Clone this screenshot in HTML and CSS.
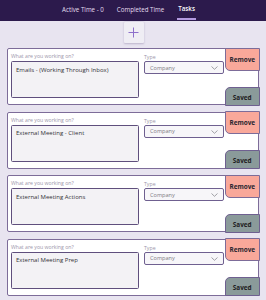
FILE: index.html
```html
<!DOCTYPE html>
<html>
<head>
<meta charset="utf-8">
<link rel="stylesheet" href="styles.css">
</head>
<body>
<header class="topbar">
  <nav class="tabs">
    <span class="tab">Active Time - 0</span>
    <span class="tab">Completed Time</span>
    <span class="tab active">Tasks</span>
  </nav>
</header>
<div class="addrow">
  <button class="addbtn" aria-label="Add">
    <svg width="11" height="11" viewBox="0 0 11 11"><path d="M5.5 0.5V10.5M0.5 5.5H10.5" stroke="#8d6fcb" stroke-width="1" fill="none"/></svg>
  </button>
</div>
<main class="list">
  <section class="card">
    <div class="work">
      <div class="lbl">What are you working on?</div>
      <div class="ta">Emails - (Working Through Inbox)</div>
    </div>
    <div class="type">
      <div class="lbl">Type</div>
      <div class="sel"><span>Company</span><svg class="chev" width="7" height="4" viewBox="0 0 7 4"><path d="M0.5 0.5L3.5 3.3L6.5 0.5" stroke="#8a8a90" stroke-width="0.8" fill="none"/></svg></div>
    </div>
    <div class="acts">
      <div class="remove">Remove</div>
      <div class="saved">Saved</div>
    </div>
  </section>
  <section class="card">
    <div class="work">
      <div class="lbl">What are you working on?</div>
      <div class="ta">External Meeting - Client</div>
    </div>
    <div class="type">
      <div class="lbl">Type</div>
      <div class="sel"><span>Company</span><svg class="chev" width="7" height="4" viewBox="0 0 7 4"><path d="M0.5 0.5L3.5 3.3L6.5 0.5" stroke="#8a8a90" stroke-width="0.8" fill="none"/></svg></div>
    </div>
    <div class="acts">
      <div class="remove">Remove</div>
      <div class="saved">Saved</div>
    </div>
  </section>
  <section class="card">
    <div class="work">
      <div class="lbl">What are you working on?</div>
      <div class="ta">External Meeting Actions</div>
    </div>
    <div class="type">
      <div class="lbl">Type</div>
      <div class="sel"><span>Company</span><svg class="chev" width="7" height="4" viewBox="0 0 7 4"><path d="M0.5 0.5L3.5 3.3L6.5 0.5" stroke="#8a8a90" stroke-width="0.8" fill="none"/></svg></div>
    </div>
    <div class="acts">
      <div class="remove">Remove</div>
      <div class="saved">Saved</div>
    </div>
  </section>
  <section class="card">
    <div class="work">
      <div class="lbl">What are you working on?</div>
      <div class="ta">External Meeting Prep</div>
    </div>
    <div class="type">
      <div class="lbl">Type</div>
      <div class="sel"><span>Company</span><svg class="chev" width="7" height="4" viewBox="0 0 7 4"><path d="M0.5 0.5L3.5 3.3L6.5 0.5" stroke="#8a8a90" stroke-width="0.8" fill="none"/></svg></div>
    </div>
    <div class="acts">
      <div class="remove">Remove</div>
      <div class="saved">Saved</div>
    </div>
  </section>
</main>
</body>
</html>
```
FILE: styles.css
```css
* { box-sizing: border-box; }
html, body { margin: 0; padding: 0; }
body {
  background: #e8e4f0;
  font-family: "Open Sans", "Liberation Sans", sans-serif;
  width: 266px;
  height: 300px;
  overflow: hidden;
}
.topbar {
  height: 21px;
  background: #2c1a4c;
  display: flex;
  justify-content: center;
}
.tabs {
  display: flex;
  gap: 13px;
  padding-right: 8px;
  height: 21px;
  align-items: stretch;
}
.tab {
  font-size: 6.2px;
  color: #e4def0;
  display: flex;
  align-items: center;
  padding-bottom: 3px;
  border-bottom: 2px solid transparent;
  padding-top: 2px;
}
.tab.active {
  color: #ffffff;
  font-weight: 600;
  border-bottom-color: #b39ae0;
  margin-bottom: 1px;
  padding-left: 1px;
  padding-right: 1px;
}
.addrow {
  display: flex;
  justify-content: center;
  padding: 1px 0 5px 1px;
}
.addbtn {
  width: 20px;
  height: 21px;
  border: none;
  padding: 0;
  background: #efedf4;
  box-shadow: 0 0.5px 2px rgba(60, 40, 100, 0.25);
  border-radius: 1px;
  display: flex;
  align-items: center;
  justify-content: center;
}
.list {
  padding: 0 7px;
  display: flex;
  flex-direction: column;
  gap: 6.5px;
}
.card {
  height: 57px;
  flex: none;
  background: #ffffff;
  border: 1.5px solid #7d6c99;
  border-radius: 2px;
  display: flex;
}
.work {
  padding: 4px 0 0 3px;
  width: 132px;
}
.lbl {
  font-size: 5.2px;
  color: #9c96aa;
  line-height: 7px;
  height: 7px;
}
.ta {
  margin-top: 1px;
  width: 128px;
  height: 37px;
  background: #f3f2f5;
  border: 1.5px solid #5f4f7d;
  border-radius: 1.5px;
  font-size: 6px;
  color: #333338;
  padding: 3.5px 0 0 4px;
}
.type {
  padding: 5px 0 0 4px;
  width: 85px;
}
.type .lbl { height: 6px; line-height: 6px; }
.sel {
  margin-top: 1px;
  width: 80px;
  height: 13px;
  border: 1.5px solid #6f6090;
  border-radius: 2px;
  background: #f7f6f9;
  font-size: 5.6px;
  color: #7c7b84;
  display: flex;
  align-items: center;
  justify-content: space-between;
  padding: 0 5px 0 5px;
}
.chev { margin-top: 1px; }
.acts {
  flex: 1;
  display: flex;
  flex-direction: column;
  justify-content: space-between;
  margin: -1.5px -1.5px -1.5px 0;
}
.remove {
  height: 23px;
  background: #f9a89a;
  border: 1.5px solid #7d6c99;
  border-bottom-left-radius: 5px;
  font-size: 6.4px;
  font-weight: 700;
  color: #2a2630;
  display: flex;
  align-items: center;
  justify-content: center;
}
.saved {
  height: 19px;
  background: #8a9a9a;
  border: 1.5px solid #6f6090;
  border-top-left-radius: 5px;
  font-size: 6.4px;
  font-weight: 700;
  color: #1e2022;
  display: flex;
  align-items: center;
  justify-content: center;
  padding-top: 2px;
}
```
